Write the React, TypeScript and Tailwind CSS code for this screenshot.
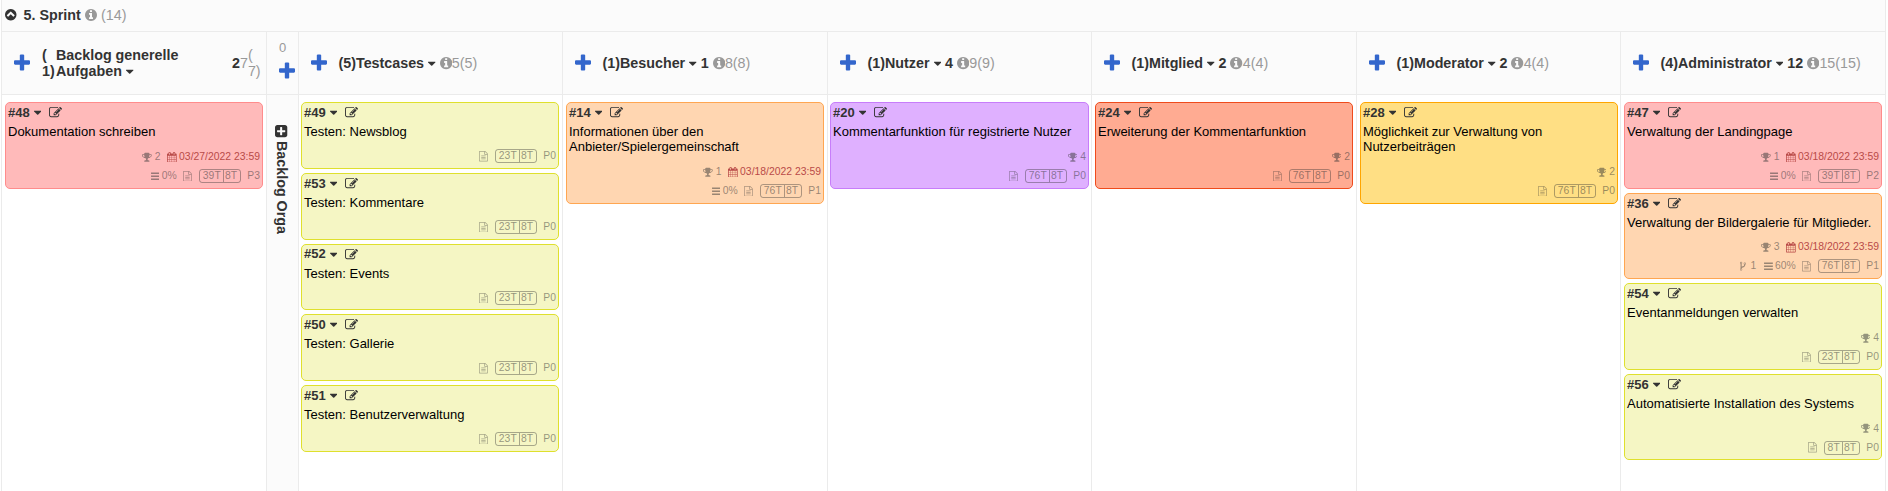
import React from "react";

type Glyph = { box: string; d: string };

const ICONS = {
  caret: {
    box: "384 0 1024 1792",
    d: "M1408 704q0 26-19 45l-448 448q-19 19-45 19t-45-19l-448-448q-19-19-19-45t19-45 45-19h896q26 0 45 19t19 45z",
  },
  plus: {
    box: "192 0 1408 1792",
    d: "M1600 736v192q0 40-28 68t-68 28h-416v416q0 40-28 68t-68 28h-192q-40 0-68-28t-28-68v-416h-416q-40 0-68-28t-28-68v-192q0-40 28-68t68-28h416v-416q0-40 28-68t68-28h192q40 0 68 28t28 68v416h416q40 0 68 28t28 68z",
  },
  info: {
    box: "128 0 1536 1792",
    d: "M1152 1376v-160q0-14-9-23t-23-9h-96v-512q0-14-9-23t-23-9h-320q-14 0-23 9t-9 23v160q0 14 9 23t23 9h96v320h-96q-14 0-23 9t-9 23v160q0 14 9 23t23 9h448q14 0 23-9t9-23zm-128-896v-160q0-14-9-23t-23-9h-192q-14 0-23 9t-9 23v160q0 14 9 23t23 9h192q14 0 23-9t9-23zm640 416q0 209-103 385.5t-279.5 279.5-385.5 103-385.5-103-279.5-279.5-103-385.5 103-385.5 279.5-279.5 385.5-103 385.5 103 279.5 279.5 103 385.5z",
  },
  up: {
    box: "128 0 1536 1792",
    d: "M1293 1139l102-102q19-19 19-45t-19-45l-454-454q-19-19-45-19t-45 19l-454 454q-19 19-19 45t19 45l102 102q19 19 45 19t45-19l307-307 307 307q19 19 45 19t45-19zm371-243q0 209-103 385.5t-279.5 279.5-385.5 103-385.5-103-279.5-279.5-103-385.5 103-385.5 279.5-279.5 385.5-103 385.5 103 279.5 279.5 103 385.5z",
  },
  bars: {
    box: "128 0 1536 1792",
    d: "M1664 1344v128q0 26-19 45t-45 19h-1408q-26 0-45-19t-19-45v-128q0-26 19-45t45-19h1408q26 0 45 19t19 45zm0-512v128q0 26-19 45t-45 19h-1408q-26 0-45-19t-19-45v-128q0-26 19-45t45-19h1408q26 0 45 19t19 45zm0-512v128q0 26-19 45t-45 19h-1408q-26 0-45-19t-19-45v-128q0-26 19-45t45-19h1408q26 0 45 19t19 45z",
  },
  file: {
    box: "128 0 1536 1792",
    d: "M1596 380q28 28 48 76t20 88v1152q0 40-28 68t-68 28h-1344q-40 0-68-28t-28-68v-1600q0-40 28-68t68-28h896q40 0 88 20t76 48zm-444-244v376h376q-10-29-22-41l-313-313q-12-12-41-22zm384 1528v-1024h-416q-40 0-68-28t-28-68v-416h-768v1536h1280zm-1024-864q0-14 9-23t23-9h704q14 0 23 9t9 23v64q0 14-9 23t-23 9h-704q-14 0-23-9t-9-23v-64zm736 224q14 0 23 9t9 23v64q0 14-9 23t-23 9h-704q-14 0-23-9t-9-23v-64q0-14 9-23t23-9h704zm0 256q14 0 23 9t9 23v64q0 14-9 23t-23 9h-704q-14 0-23-9t-9-23v-64q0-14 9-23t23-9h704z",
  },
  edit: {
    box: "0 0 1792 1792",
    d: "M888 1184l116-116-152-152-116 116v56h96v96h56zm440-720q-16-16-33 1l-350 350q-17 17-1 33t33-1l350-350q17-17 1-33zm80 594v190q0 119-84.5 203.5t-203.5 84.5h-832q-119 0-203.5-84.5t-84.5-203.5v-832q0-119 84.5-203.5t203.5-84.5h832q63 0 117 25 15 7 18 23 3 17-9 29l-49 49q-14 14-32 8-23-6-45-6h-832q-66 0-113 47t-47 113v832q0 66 47 113t113 47h832q66 0 113-47t47-113v-126q0-13 9-22l64-64q15-15 35-7t20 29zm-96-738l288 288-672 672h-288v-288zm444 132l-92 92-288-288 92-92q28-28 68-28t68 28l152 152q28 28 28 68t-28 68z",
  },
  calendar: {
    box: "64 0 1664 1792",
    d: "M192 1664h288v-288h-288v288zm352 0h320v-288h-320v288zm-352-352h288v-320h-288v320zm352 0h320v-320h-320v320zm-352-384h288v-288h-288v288zm736 736h320v-288h-320v288zm-384-736h320v-288h-320v288zm768 736h288v-288h-288v288zm-384-352h320v-320h-320v320zm-352-864v-288q0-13-9.5-22.5t-22.5-9.5h-64q-13 0-22.5 9.5t-9.5 22.5v288q0 13 9.5 22.5t22.5 9.5h64q13 0 22.5-9.5t9.5-22.5zm736 864h288v-320h-288v320zm-384-384h320v-288h-320v288zm384 0h288v-288h-288v288zm32-480v-288q0-13-9.5-22.5t-22.5-9.5h-64q-13 0-22.5 9.5t-9.5 22.5v288q0 13 9.5 22.5t22.5 9.5h64q13 0 22.5-9.5t9.5-22.5zm384-64v1280q0 52-38 90t-90 38h-1408q-52 0-90-38t-38-90v-1280q0-52 38-90t90-38h128v-96q0-66 47-113t113-47h64q66 0 113 47t47 113v96h384v-96q0-66 47-113t113-47h64q66 0 113 47t47 113v96h128q52 0 90 38t38 90z",
  },
  trophy: {
    box: "64 0 1664 1792",
    d: "M522 883q-74-162-74-371h-256v96q0 78 94.5 162t235.5 113zm1078-275v-96h-256q0 209-74 371 141-29 235.5-113t94.5-162zm128-128v128q0 71-41.5 143t-112 130-173 97.5-215.5 44.5q-42 54-95 95-38 34-52.5 72.5t-14.5 89.5q0 54 30.5 91t97.5 37q75 0 133.5 45.5t58.5 114.5v64q0 14-9 23t-23 9h-832q-14 0-23-9t-9-23v-64q0-69 58.5-114.5t133.5-45.5q67 0 97.5-37t30.5-91q0-51-14.5-89.5t-52.5-72.5q-53-41-95-95-113-5-215.5-44.5t-173-97.5-112-130-41.5-143v-128q0-40 28-68t68-28h288v-96q0-66 47-113t113-47h576q66 0 113 47t47 113v96h288q40 0 68 28t28 68z",
  },
  fork: {
    box: "384 0 1024 1792",
    d: "M672 1472q0-40-28-68t-68-28-68 28-28 68 28 68 68 28 68-28 28-68zm0-1152q0-40-28-68t-68-28-68 28-28 68 28 68 68 28 68-28 28-68zm640 128q0-40-28-68t-68-28-68 28-28 68 28 68 68 28 68-28 28-68zm96 0q0 52-26 96.5t-70 69.5q-2 287-226 414-67 38-203 81-128 40-169.5 71t-41.5 100v26q44 25 70 69.5t26 96.5q0 80-56 136t-136 56-136-56-56-136q0-52 26-96.5t70-69.5v-820q-44-25-70-69.5t-26-96.5q0-80 56-136t136-56 136 56 56 136q0 52-26 96.5t-70 69.5v497q54-26 154-57 55-17 87.5-29.5t70.5-31 59-39.5 40.5-51 28-69.5 8.5-91.5q-44-25-70-69.5t-26-96.5q0-80 56-136t136-56 136 56 56 136z",
  },
  plusSquare: {
    box: "128 0 1536 1792",
    d: "M1408 960v-128q0-26-19-45t-45-19h-320v-320q0-26-19-45t-45-19h-128q-26 0-45 19t-19 45v320h-320q-26 0-45 19t-19 45v128q0 26 19 45t45 19h320v320q0 26 19 45t45 19h128q26 0 45-19t19-45v-320h320q26 0 45-19t19-45zm256-544v960q0 119-84.5 203.5t-203.5 84.5h-960q-119 0-203.5-84.5t-84.5-203.5v-960q0-119 84.5-203.5t203.5-84.5h960q119 0 203.5 84.5t84.5 203.5z",
  },
} satisfies Record<string, Glyph>;

function Icon({ name, className }: { name: keyof typeof ICONS; className: string }) {
  return (
    <svg viewBox={ICONS[name].box} fill="currentColor" className={`shrink-0 ${className}`} aria-hidden="true">
      <path d={ICONS[name].d} />
    </svg>
  );
}

const COLORS = {
  red: "bg-[#ffbaba] border-[#ff8c8c]",
  yellow: "bg-[#f5f6c4] border-[#dfe02d]",
  orange: "bg-[#ffd6b1] border-[#ffa651]",
  purple: "bg-[#dfb0ff] border-[#c77dfa]",
  coral: "bg-[#ffab92] border-[#ef4b1c]",
  gold: "bg-[#ffdf84] border-[#ffa500]",
};

type Task = {
  id: number;
  title: string;
  color: keyof typeof COLORS;
  effort: string;
  prio: string;
  trophy?: number;
  due?: string;
  progress?: string;
  forks?: number;
  tall?: boolean;
};

function Card({ task }: { task: Task }) {
  const height = task.tall ? "h-[101.6px]" : task.trophy ? "h-[86.4px]" : "h-[66.9px]";
  return (
    <article className={`flex flex-col rounded-[5px] border pl-[2px] pr-[2px] ${height} ${COLORS[task.color]}`}>
      <div className="flex h-[19px] items-center text-[13px] font-bold text-[#333]">
        <span>#{task.id}</span>
        <Icon name="caret" className="ml-[4px] h-[13px] w-[7.4px]" />
        <Icon name="edit" className="ml-[7.5px] size-[13px]" />
      </div>
      <h3 className="mt-[2px] text-[13px] leading-[15px] text-black">{task.title}</h3>
      <div className="mt-auto text-[10.4px] leading-[12px] text-[#333]/50">
        {task.trophy && (
          <div className="mb-[6.5px] flex items-center justify-end">
            <Icon name="trophy" className="mr-[2.9px] h-[10.4px] w-[9.7px]" />
            <span>{task.trophy}</span>
            {task.due && (
              <span className="ml-[6.5px] flex items-center text-[#b94a48]">
                <Icon name="calendar" className="mr-[2.5px] h-[10.4px] w-[9.7px]" />
                {task.due}
              </span>
            )}
          </div>
        )}
        <div className="mb-[5.2px] flex h-[13px] items-center justify-end">
          {task.forks && (
            <span className="mr-[7.5px] flex items-center">
              <Icon name="fork" className="mr-[4.5px] h-[10.4px] w-[5.9px]" />
              {task.forks}
            </span>
          )}
          {task.progress && (
            <span className="mr-[6.6px] flex items-center">
              <Icon name="bars" className="mr-[2.2px] h-[10.4px] w-[8.9px]" />
              {task.progress}
            </span>
          )}
          <Icon name="file" className="mr-[7.2px] h-[10.4px] w-[8.9px] opacity-80" />
          <span className="mr-[6.5px] flex h-[14px] items-center rounded-[3px] border border-[#333]/40">
            <span className="pl-[2.5px] pr-[2px]">{task.effort}</span>
            <span className="flex h-full items-center border-l border-[#333]/40 pl-[1.3px] pr-[2.6px]">8T</span>
          </span>
          <span>{task.prio}</span>
        </div>
      </div>
    </article>
  );
}

type Column = {
  name: string;
  count: number;
  points?: string;
  total: number;
  cell: string;
  pad: string;
  tasks: Task[];
};

const test = (id: number, title: string): Task => ({ id, title, color: "yellow", effort: "23T", prio: "P0" });

const COLUMNS: Column[] = [
  {
    name: "Testcases", count: 5, total: 5, cell: "w-[264px]", pad: "gap-[3.8px] pl-[2px] pr-[3px]",
    tasks: [
      test(49, "Testen: Newsblog"),
      test(53, "Testen: Kommentare"),
      test(52, "Testen: Events"),
      test(50, "Testen: Gallerie"),
      test(51, "Testen: Benutzerverwaltung"),
    ],
  },
  {
    name: "Besucher", count: 1, points: "1", total: 8, cell: "w-[265px]", pad: "pl-[3px] pr-[3px]",
    tasks: [{ id: 14, title: "Informationen über den Anbieter/Spielergemeinschaft", color: "orange", effort: "76T", prio: "P1", trophy: 1, due: "03/18/2022 23:59", progress: "0%", tall: true }],
  },
  {
    name: "Nutzer", count: 1, points: "4", total: 9, cell: "w-[264px]", pad: "pl-[2px] pr-[2px]",
    tasks: [{ id: 20, title: "Kommentarfunktion für registrierte Nutzer", color: "purple", effort: "76T", prio: "P0", trophy: 4 }],
  },
  {
    name: "Mitglied", count: 1, points: "2", total: 4, cell: "w-[265px]", pad: "pl-[3px] pr-[3px]",
    tasks: [{ id: 24, title: "Erweiterung der Kommentarfunktion", color: "coral", effort: "76T", prio: "P0", trophy: 2 }],
  },
  {
    name: "Moderator", count: 1, points: "2", total: 4, cell: "w-[264px]", pad: "pl-[3px] pr-[2px]",
    tasks: [{ id: 28, title: "Möglichkeit zur Verwaltung von Nutzerbeiträgen", color: "gold", effort: "76T", prio: "P0", trophy: 2, tall: true }],
  },
  {
    name: "Administrator", count: 4, points: "12", total: 15, cell: "w-[265px]", pad: "gap-[4.2px] pl-[3px] pr-[3px]",
    tasks: [
      { id: 47, title: "Verwaltung der Landingpage", color: "red", effort: "39T", prio: "P2", trophy: 1, due: "03/18/2022 23:59", progress: "0%" },
      { id: 36, title: "Verwaltung der Bildergalerie für Mitglieder.", color: "orange", effort: "76T", prio: "P1", trophy: 3, due: "03/18/2022 23:59", progress: "60%", forks: 1 },
      { id: 54, title: "Eventanmeldungen verwalten", color: "yellow", effort: "23T", prio: "P0", trophy: 4 },
      { id: 56, title: "Automatisierte Installation des Systems", color: "yellow", effort: "8T", prio: "P0", trophy: 4 },
    ],
  },
];

const BACKLOG: Task = { id: 48, title: "Dokumentation schreiben", color: "red", effort: "39T", prio: "P3", trophy: 2, due: "03/27/2022 23:59", progress: "0%" };

const headCell = "flex h-[63px] shrink-0 border-b border-[#ebebeb] bg-[#fbfbfb] leading-[16px]";

export default function App() {
  return (
    <div className="h-[491px] w-[1888px] overflow-hidden bg-white pl-[1px] font-['Liberation_Sans',Arial,sans-serif] text-[14.3px] text-[#333]">
      <div className="flex h-full w-[1885px] flex-col border-x border-[#ebebeb]">
        <header className="flex h-[32px] shrink-0 items-center border-b border-[#ebebeb] bg-[#fbfbfb] pb-[1px] pl-[3px] leading-[18px]">
          <Icon name="up" className="h-[13.4px] w-[11.5px]" />
          <span className="ml-[7px] font-bold">5. Sprint</span>
          <Icon name="info" className="ml-[4.3px] h-[14px] w-[12px] text-[#999]" />
          <span className="ml-[4px] text-[#999]">(14)</span>
        </header>
        <div className="flex min-h-0 flex-1">
          <section className="flex w-[264px] shrink-0 flex-col">
            <div className={`${headCell} items-center pl-[12px]`}>
              <Icon name="plus" className="h-[20.4px] w-[16px] text-[#3366cc]" />
              <span className="ml-[12px] w-[14px] font-bold">( 1)</span>
              <span className="w-[176px] font-bold">
                Backlog generelle
                <span className="flex items-center">
                  Aufgaben
                  <Icon name="caret" className="ml-[4.5px] h-[13px] w-[7.4px]" />
                </span>
              </span>
              <span className="font-bold">2</span>
              <span className="text-[#999]">7</span>
              <span className="w-[14px] text-[#999]">( 7)</span>
            </div>
            <div className="pl-[3px] pr-[3px] pt-[7.2px]">
              <Card task={BACKLOG} />
            </div>
          </section>
          <section className="flex w-[32px] shrink-0 flex-col border-l border-[#ebebeb] bg-[#fbfbfb]">
            <div className={`${headCell} flex-col items-start pl-[12px] pt-[8px] text-[#999]`}>
              <span className="text-[13px]">0</span>
              <Icon name="plus" className="mt-[4.5px] h-[20.4px] w-[16px] text-[#3366cc]" />
            </div>
            <div className="flex items-center self-start pl-[6px] pt-[29px] font-bold leading-[17px] [writing-mode:vertical-rl]">
              <Icon name="plusSquare" className="h-[14.3px] w-[12.3px]" />
              <span className="mt-[2.7px]">Backlog Orga</span>
            </div>
          </section>
          {COLUMNS.map((col) => (
            <section key={col.name} className={`flex shrink-0 flex-col border-l border-[#ebebeb] ${col.cell}`}>
              <div className={`${headCell} items-center pl-[12px]`}>
                <Icon name="plus" className="h-[20.4px] w-[16px] text-[#3366cc]" />
                <span className="ml-[11.5px] font-bold">({col.count}){col.name}</span>
                <Icon name="caret" className="ml-[4.3px] mr-[3.8px] h-[13px] w-[7.4px]" />
                {col.points && <span className="mr-[4px] font-bold">{col.points}</span>}
                <Icon name="info" className="h-[14.3px] w-[12.3px] text-[#999]" />
                <span className="text-[#999]">{col.total}({col.total})</span>
              </div>
              <div className={`flex flex-col pt-[7.2px] ${col.pad}`}>
                {col.tasks.map((task) => (
                  <Card key={task.id} task={task} />
                ))}
              </div>
            </section>
          ))}
        </div>
      </div>
    </div>
  );
}
